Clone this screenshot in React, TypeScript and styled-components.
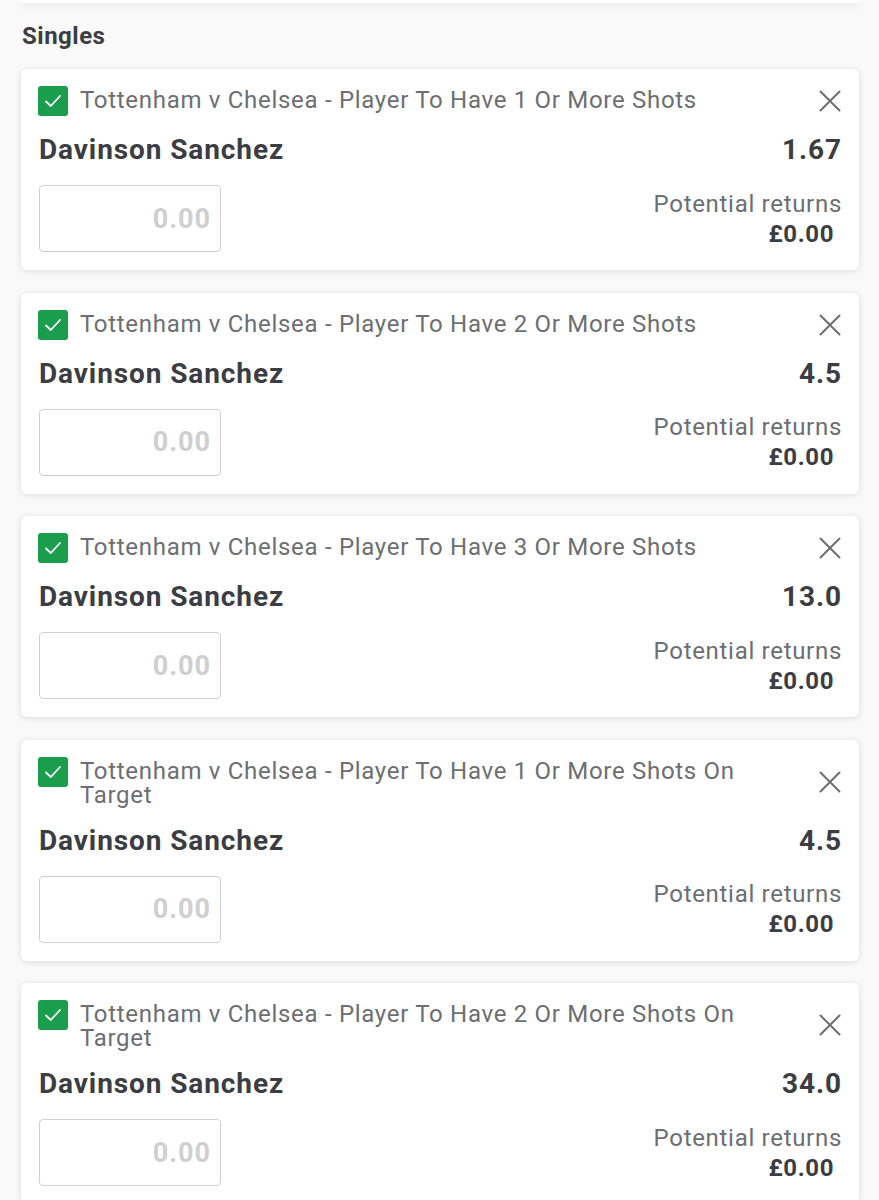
import styled, { createGlobalStyle } from 'styled-components';

const bets = [
  { market: 'Tottenham v Chelsea - Player To Have 1 Or More Shots', odds: '1.67' },
  { market: 'Tottenham v Chelsea - Player To Have 2 Or More Shots', odds: '4.5' },
  { market: 'Tottenham v Chelsea - Player To Have 3 Or More Shots', odds: '13.0' },
  { market: 'Tottenham v Chelsea - Player To Have 1 Or More Shots On Target', odds: '4.5' },
  { market: 'Tottenham v Chelsea - Player To Have 2 Or More Shots On Target', odds: '34.0' },
];

const GlobalStyle = createGlobalStyle`
  body {
    margin: 0;
    background: #f9f9f9;
    font-family: Roboto, "Noto Sans", sans-serif;
  }
`;

const CheckIcon = () => (
  <svg width="18" height="14" viewBox="0 0 18 14" fill="none">
    <path d="M2 7.5 L6.8 12 L16 2" stroke="#fff" strokeWidth="1.8" strokeLinecap="round" strokeLinejoin="round" />
  </svg>
);

const CloseIcon = () => (
  <svg width="22" height="22" viewBox="0 0 22 22" fill="none">
    <path d="M1.5 1.5 L20.5 20.5 M20.5 1.5 L1.5 20.5" stroke="#6d6e72" strokeWidth="2" strokeLinecap="round" />
  </svg>
);

const App = () => {
  return (
    <Page>
      <GlobalStyle />
      <TopCard />
      <Heading>Singles</Heading>
      <List>
        {bets.map((bet, index) => (
          <Card key={index}>
            <Header>
              <Checkbox>
                <CheckIcon />
              </Checkbox>
              <Market>{bet.market}</Market>
              <CloseButton>
                <CloseIcon />
              </CloseButton>
            </Header>
            <SelectionRow>
              <span>Davinson Sanchez</span>
              <span>{bet.odds}</span>
            </SelectionRow>
            <StakeRow>
              <StakeInput>0.00</StakeInput>
              <Returns>
                <ReturnsLabel>Potential returns</ReturnsLabel>
                <ReturnsValue>£0.00</ReturnsValue>
              </Returns>
            </StakeRow>
          </Card>
        ))}
      </List>
    </Page>
  );
};

const Page = styled.div`
  padding: 0 20px 0 21px;
  min-height: 1200px;
  overflow: hidden;
`;

const TopCard = styled.div`
  height: 3px;
  background: #fff;
  border-radius: 0 0 6px 6px;
  box-shadow: 0 2px 8px rgba(0, 0, 0, 0.12);
`;

const Heading = styled.h2`
  margin: 0;
  padding: 19px 0 0 1px;
  height: 48px;
  box-sizing: border-box;
  font-size: 24px;
  line-height: 28px;
  letter-spacing: 0.5px;
  font-weight: 700;
  color: #3c3d42;
`;

const List = styled.div`
  display: flex;
  flex-direction: column;
  gap: 22.5px;
  margin-top: 18px;
`;

const Card = styled.div`
  background: #fff;
  border-radius: 6px;
  box-shadow: 0 1px 6px rgba(0, 0, 0, 0.12);
  padding: 17px 17px 18px 17px;
`;

const Header = styled.div`
  display: flex;
  align-items: flex-start;
  gap: 12px;
`;

const Checkbox = styled.div`
  flex: none;
  width: 30px;
  height: 30px;
  border-radius: 3px;
  background: #1a9d4c;
  display: flex;
  align-items: center;
  justify-content: center;
`;

const Market = styled.div`
  flex: 1;
  font-size: 24px;
  line-height: 24px;
  letter-spacing: 0.7px;
  color: #6d6e72;
  padding-top: 2px;
  padding-right: 40px;
`;

const CloseButton = styled.div`
  flex: none;
  align-self: center;
  display: flex;
  margin-right: 1px;
`;

const SelectionRow = styled.div`
  display: flex;
  justify-content: space-between;
  align-items: center;
  margin-top: 16px;
  padding-left: 1px;
  font-size: 28px;
  line-height: 36px;
  letter-spacing: 0.9px;
  font-weight: 700;
  color: #3c3d42;
`;

const StakeRow = styled.div`
  display: flex;
  justify-content: space-between;
  align-items: center;
  margin-top: 17px;
`;

const StakeInput = styled.div`
  width: 182px;
  height: 67px;
  box-sizing: border-box;
  margin-left: 1px;
  border: 1.5px solid #cfcfd1;
  border-radius: 4px;
  display: flex;
  align-items: center;
  justify-content: flex-end;
  padding-right: 9px;
  font-size: 27px;
  letter-spacing: 1px;
  font-weight: 700;
  color: #cfcfd1;
`;

const Returns = styled.div`
  display: flex;
  flex-direction: column;
  align-items: flex-end;
  text-align: right;
`;

const ReturnsLabel = styled.div`
  font-size: 24px;
  line-height: 30px;
  letter-spacing: 0.7px;
  color: #6d6e72;
`;

const ReturnsValue = styled.div`
  font-size: 24px;
  line-height: 30px;
  letter-spacing: 0.6px;
  font-weight: 700;
  color: #3c3d42;
  padding-right: 8px;
`;

export default App;
